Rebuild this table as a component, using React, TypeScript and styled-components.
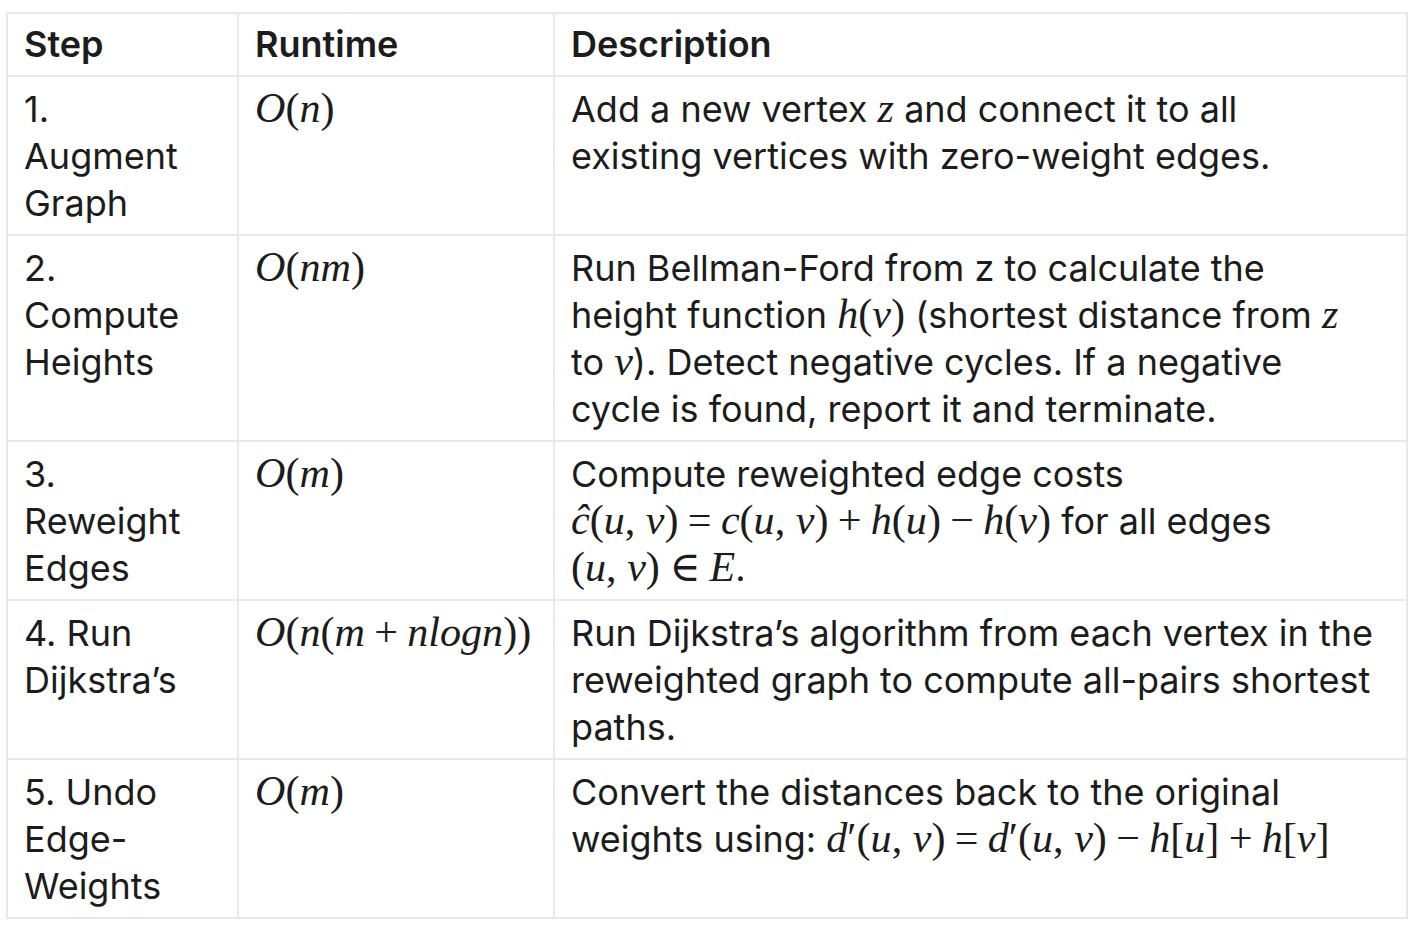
import React from 'react'
import styled, { createGlobalStyle } from 'styled-components'

const GlobalStyle = createGlobalStyle`
  html, body {
    margin: 0;
    padding: 0;
    background: #ffffff;
  }
  body {
    font-family: Inter, "Noto Sans", sans-serif;
    color: #1c1c1c;
  }
`

const Page = styled.div`
  padding: 12px 8px 10px 6px;
`

const Table = styled.table`
  width: 1400px;
  border-collapse: collapse;
  table-layout: fixed;
  font-size: 36px;
  line-height: 47px;
`

const HeadCell = styled.th<{ $w: number }>`
  box-sizing: border-box;
  width: ${p => p.$w}px;
  text-align: left;
  font-weight: 600;
  padding: 7px 29px 7px 16px;
  border: 2px solid #e8e8e8;
`

const Cell = styled.td`
  vertical-align: top;
  padding: 9px 29px 7px 16px;
  border: 2px solid #e8e8e8;
`

const MathText = styled.span`
  font-family: "Liberation Serif", "DejaVu Serif", serif;
  font-size: 1.17em;
  line-height: 0;
  white-space: nowrap;
`

const Var = styled.i`
  font-style: italic;
`

const Op = styled.span`
  padding: 0 0.22em;
`

type Row = { step: string; runtime: React.ReactNode; desc: React.ReactNode }

const rows: Row[] = [
  {
    step: '1. Augment Graph',
    runtime: <MathText><Var>O</Var>(<Var>n</Var>)</MathText>,
    desc: (
      <>
        Add a new vertex <MathText><Var>z</Var></MathText> and connect it to all existing vertices with
        zero-weight edges.
      </>
    ),
  },
  {
    step: '2. Compute Heights',
    runtime: <MathText><Var>O</Var>(<Var>nm</Var>)</MathText>,
    desc: (
      <>
        Run Bellman-Ford from z to calculate the height function{' '}
        <MathText><Var>h</Var>(<Var>v</Var>)</MathText> (shortest distance from{' '}
        <MathText><Var>z</Var></MathText> to <MathText><Var>v</Var></MathText>). Detect negative cycles. If a
        negative cycle is found, report it and terminate.
      </>
    ),
  },
  {
    step: '3. Reweight Edges',
    runtime: <MathText><Var>O</Var>(<Var>m</Var>)</MathText>,
    desc: (
      <>
        Compute reweighted edge costs{' '}
        <MathText>
          <Var>ĉ</Var>(<Var>u</Var>, <Var>v</Var>)<Op>=</Op><Var>c</Var>(<Var>u</Var>, <Var>v</Var>)<Op>+</Op>
          <Var>h</Var>(<Var>u</Var>)<Op>−</Op><Var>h</Var>(<Var>v</Var>)
        </MathText>{' '}
        for all edges{' '}
        <MathText>
          (<Var>u</Var>, <Var>v</Var>)<Op>∈</Op><Var>E</Var>
        </MathText>
        .
      </>
    ),
  },
  {
    step: '4. Run Dijkstra’s',
    runtime: (
      <MathText>
        <Var>O</Var>(<Var>n</Var>(<Var>m</Var><Op>+</Op><Var>nlogn</Var>))
      </MathText>
    ),
    desc: (
      <>
        Run Dijkstra’s algorithm from each vertex in the reweighted graph to compute all-pairs shortest
        paths.
      </>
    ),
  },
  {
    step: '5. Undo Edge-Weights',
    runtime: <MathText><Var>O</Var>(<Var>m</Var>)</MathText>,
    desc: (
      <>
        Convert the distances back to the original weights using:{' '}
        <MathText>
          <Var>d</Var>′(<Var>u</Var>, <Var>v</Var>)<Op>=</Op><Var>d</Var>′(<Var>u</Var>, <Var>v</Var>)<Op>−</Op>
          <Var>h</Var>[<Var>u</Var>]<Op>+</Op><Var>h</Var>[<Var>v</Var>]
        </MathText>
      </>
    ),
  },
]

const App = () => {
  return (
    <>
      <GlobalStyle />
      <Page>
        <Table>
          <thead>
            <tr>
              <HeadCell $w={231}>Step</HeadCell>
              <HeadCell $w={316}>Runtime</HeadCell>
              <HeadCell $w={853}>Description</HeadCell>
            </tr>
          </thead>
          <tbody>
            {rows.map(r => (
              <tr key={r.step}>
                <Cell>{r.step}</Cell>
                <Cell>{r.runtime}</Cell>
                <Cell>{r.desc}</Cell>
              </tr>
            ))}
          </tbody>
        </Table>
      </Page>
    </>
  )
}

export default App
